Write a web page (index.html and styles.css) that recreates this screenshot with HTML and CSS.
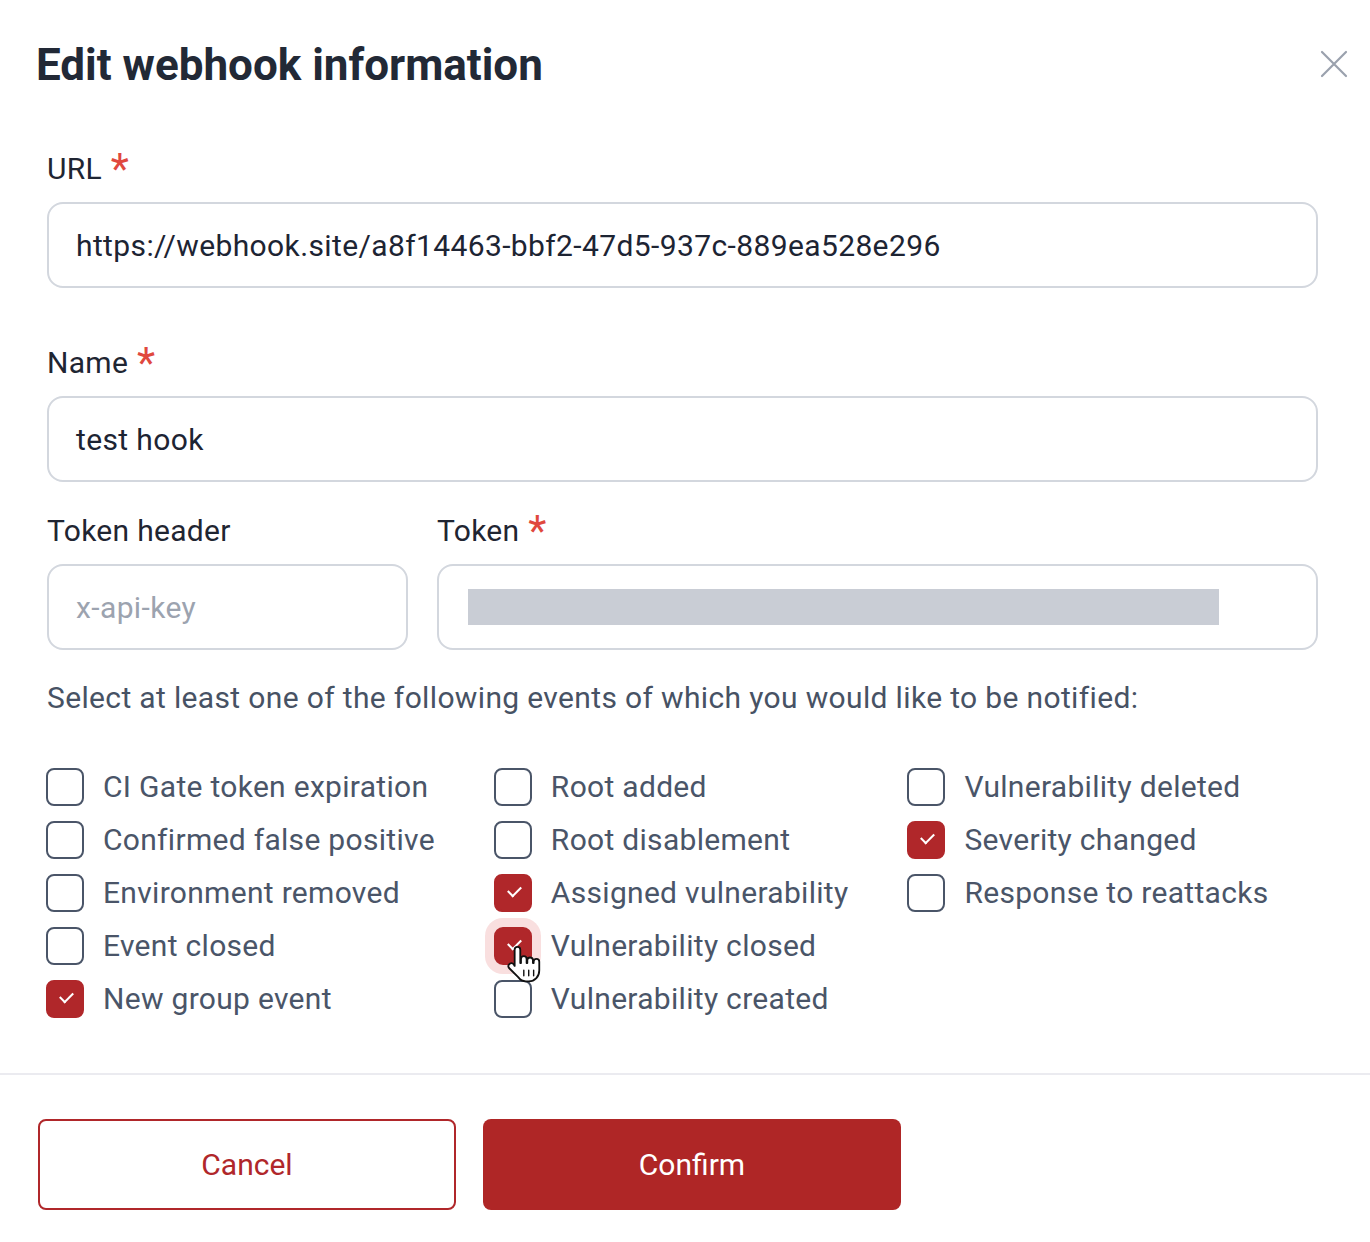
FILE: index.html
```html
<!DOCTYPE html>
<html lang="en">
<head>
  <meta charset="UTF-8" />
  <title>Edit webhook information</title>
  <link rel="stylesheet" href="styles.css">
</head>
<body>
  <div class="modal">
    <!-- Header -->
    <div class="modal-header">
      <h1>Edit webhook information</h1>
      <svg class="close" width="28" height="28" viewBox="0 0 28 28">
        <path d="M2 2L26 26M26 2L2 26" stroke="#9aa1ad" stroke-width="2.2" stroke-linecap="round" fill="none" />
      </svg>
    </div>

    <form class="modal-body">
      <div class="field field-url">
        <label>URL <span class="req">*</span></label>
        <div class="input">https://webhook.site/a8f14463-bbf2-47d5-937c-889ea528e296</div>
      </div>

      <div class="field field-name">
        <label>Name <span class="req">*</span></label>
        <div class="input">test hook</div>
      </div>

      <div class="token-row">
        <div class="field">
          <label>Token header</label>
          <div class="input placeholder">x-api-key</div>
        </div>
        <div class="field">
          <label>Token <span class="req">*</span></label>
          <div class="input"><span class="masked"></span></div>
        </div>
      </div>

      <p class="hint">Select at least one of the following events of which you would like to be notified:</p>

      <div class="events">
        <div class="event"><span class="box"></span>CI Gate token expiration</div>
        <div class="event"><span class="box"></span>Confirmed false positive</div>
        <div class="event"><span class="box"></span>Environment removed</div>
        <div class="event"><span class="box"></span>Event closed</div>
        <div class="event"><span class="box checked"></span>New group event</div>

        <div class="event"><span class="box"></span>Root added</div>
        <div class="event"><span class="box"></span>Root disablement</div>
        <div class="event"><span class="box checked"></span>Assigned vulnerability</div>
        <div class="event">
          <span class="box checked hovered">
            <svg class="cursor" width="45" height="45" viewBox="0 0 32 32">
              <path d="M11 3.5c1.1 0 2 .9 2 2V15h.5V12c0-1.1.9-2 2-2s2 .9 2 2v3h.5v-2c0-1.1.9-2 2-2s2 .9 2 2v2h.5v-1c0-1.1.9-2 2-2s2 .9 2 2v6c0 4.5-3 8-7.5 8h-2c-2.5 0-4-1-5.5-3L5 18.5c-.7-1-.5-2.3.5-3s2.2-.4 2.9.5L9 17V5.5c0-1.1.9-2 2-2z" fill="#fff" stroke="#111" stroke-width="1.3" stroke-linejoin="round" />
              <path d="M15.5 20v4M19 20v4M22.5 20v4" stroke="#111" stroke-width="1" stroke-linecap="round" />
            </svg>
          </span>Vulnerability closed
        </div>
        <div class="event"><span class="box"></span>Vulnerability created</div>

        <div class="event"><span class="box"></span>Vulnerability deleted</div>
        <div class="event"><span class="box checked"></span>Severity changed</div>
        <div class="event"><span class="box"></span>Response to reattacks</div>
      </div>
    </form>

    <!-- Footer -->
    <div class="modal-footer">
      <button class="btn btn-outline" type="button">Cancel</button>
      <button class="btn btn-primary" type="submit">Confirm</button>
    </div>
  </div>
</body>
</html>
```

FILE: styles.css
```css
body {
  margin: 0;
  background: #fff;
  font-family: Roboto, "Liberation Sans", sans-serif;
  color: #1f2532;
}
.modal {
  width: 1370px;
}
.modal-header {
  display: flex;
  align-items: center;
  justify-content: space-between;
  padding: 39px 22px 0 36px;
}
.modal-header h1 {
  margin: 0;
  font-size: 44px;
  line-height: 52px;
  font-weight: 700;
  color: #222936;
}
.close {
  margin-top: -2px;
}
.modal-body {
  padding: 60px 52px 0 47px;
}
.field label {
  display: block;
  font-size: 30px;
  line-height: 36px;
  letter-spacing: 0.3px;
  margin-bottom: 15px;
  color: #1f2532;
}
.req {
  display: inline-block;
  color: #e0483e;
  font-size: 42px;
  line-height: 0;
  vertical-align: top;
  position: relative;
  top: 18px;
  margin-left: 1px;
}
.input {
  box-sizing: border-box;
  height: 86px;
  border: 2px solid #d3d7de;
  border-radius: 16px;
  padding: 0 27px;
  display: flex;
  align-items: center;
  font-size: 30px;
  letter-spacing: 0.38px;
  color: #1d2433;
}
.input.placeholder {
  color: #9ca3af;
}
.masked {
  display: block;
  width: 751px;
  height: 36px;
  background: #c9cdd5;
  margin-left: 2px;
}
.field-name {
  margin-top: 57px;
}
.token-row {
  display: grid;
  grid-template-columns: 361px 1fr;
  column-gap: 29px;
  margin-top: 31px;
}
.hint {
  margin: 30px 0 0;
  font-size: 30px;
  line-height: 36px;
  letter-spacing: 0.35px;
  color: #475264;
}
.events {
  display: grid;
  grid-template-rows: repeat(5, 53px);
  grid-auto-flow: column;
  grid-auto-columns: max-content;
  column-gap: 59px;
  margin-top: 44px;
  margin-left: -1px;
}
.event {
  display: flex;
  align-items: center;
  font-size: 30px;
  letter-spacing: 0.3px;
  color: #4a5568;
}
.box {
  position: relative;
  box-sizing: border-box;
  width: 38px;
  height: 38px;
  border: 2px solid #4a5568;
  border-radius: 8px;
  margin-right: 19px;
  flex-shrink: 0;
  background: #fff;
}
.box.checked {
  background: #b0272a;
  border-color: #b0272a;
}
.box.checked::after {
  content: "";
  position: absolute;
  left: 12px;
  top: 10px;
  width: 11px;
  height: 6px;
  border-left: 2px solid #fff;
  border-bottom: 2px solid #fff;
  transform: rotate(-45deg);
}
.box.hovered {
  box-shadow: 0 0 0 9px #f9dfdf;
  border-radius: 9px;
}
.cursor {
  position: absolute;
  left: 6px;
  top: 13px;
  z-index: 2;
}
.modal-footer {
  margin-top: 48px;
  border-top: 2px solid #ebebf0;
  padding: 44px 0 0 38px;
  display: flex;
  gap: 27px;
}
.btn {
  width: 418px;
  height: 91px;
  border-radius: 8px;
  font-family: Roboto, "Liberation Sans", sans-serif;
  font-size: 30px;
  cursor: pointer;
}
.btn-outline {
  background: #fff;
  border: 2px solid #b0272a;
  color: #b0272a;
}
.btn-primary {
  background: #af2626;
  border: none;
  color: #fff;
}
```
